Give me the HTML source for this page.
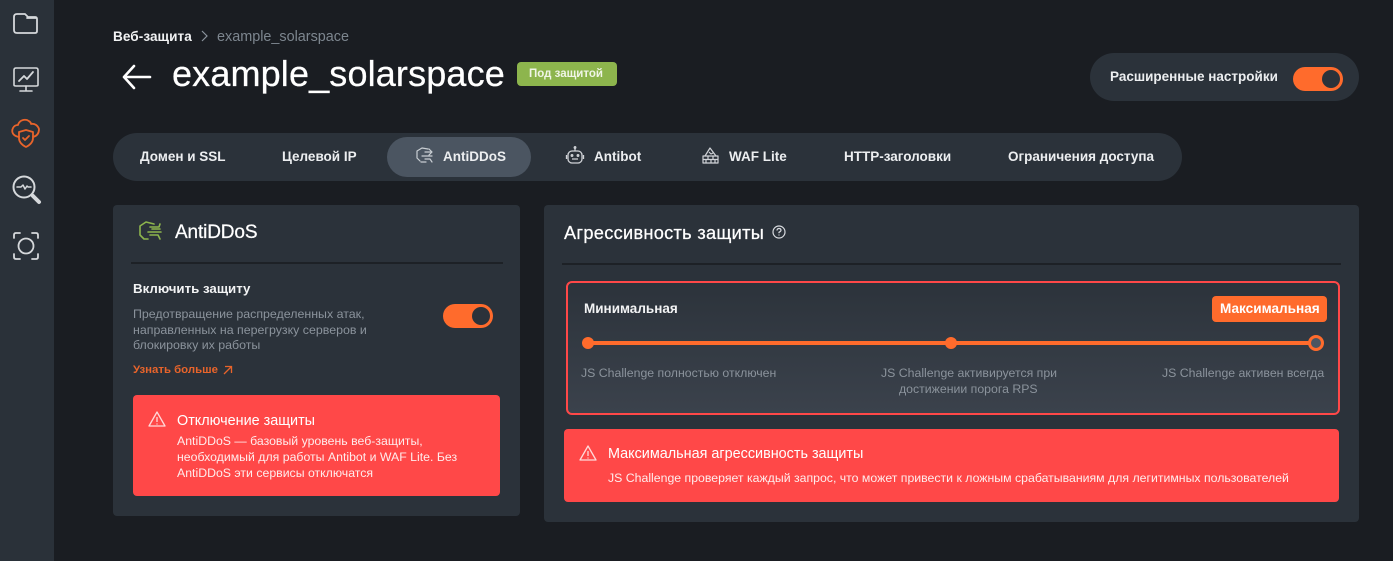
<!DOCTYPE html>
<html lang="ru"><head><meta charset="utf-8"><title>AntiDDoS</title>
<style>
html,body{margin:0;padding:0;background:#1a1d22;}
#p{position:relative;width:1393px;height:561px;overflow:hidden;background:#1a1d22;font-family:"Liberation Sans",sans-serif;color:#fff;filter:blur(.3px);}
#p div,#p span.t{position:absolute;white-space:nowrap;}
.t{line-height:1;}
.box{border-radius:4px;}
svg{position:absolute;overflow:visible;fill:none;}
.tg{width:50px;height:24px;background:#ff6b2c;border-radius:12px;}
.tg i{position:absolute;left:29px;top:3px;width:18px;height:18px;border-radius:50%;background:#2b323a;display:block;}
.tab{font-size:13.5px;font-weight:bold;color:#eceef0;top:150px;}
.g{color:#8b939c;font-size:12.3px;}
.w{-webkit-text-stroke:.25px currentColor;}
</style></head><body><div id="p">

<div style="left:0;top:0;width:54px;height:561px;background:#2a3139"></div>
<svg style="left:0;top:0" width="54" height="270" stroke="#d5d8db" stroke-width="1.8" stroke-linejoin="round" stroke-linecap="round">
<path d="M14 17q0-3 3-3h8l3 3h7q2 0 2 2v12q0 2-2 2H17q-3 0-3-3z"/><path d="M27 18h9"/>
<path d="M16 68h20q2 0 2 2v15q0 1-2 1H16q-2 0-2-1V70q0-2 2-2z" stroke-width="1.6"/><path d="M19 81l5-5 3 3 6-7"/><path d="M26 86v4M20 91h12" stroke-width="1.6"/>
<g stroke="#e8642b"><path d="M19 137c-6-1-8-5-6-9 1-2 3-3 5-3 1-4 5-6 9-5 2 1 4 2 4 4 4-1 7 2 8 5 0 4-2 7-6 8"/><path d="M26 130l7 2v6c0 4-3 7-7 9-4-2-7-5-7-9v-6z"/><path d="M23 138l2 2 4-4"/></g>
<circle cx="24" cy="187" r="10.5" stroke-width="2"/><path d="M17 187h4l2-2 2 4 2-3 1 1h3" stroke-width="1.5"/><path d="M33 196l6 6" stroke-width="4"/>
<path d="M14 238v-3q0-2 2-2h4M32 233h4q2 0 2 2v3M38 254v3q0 2-2 2h-4M20 259h-4q-2 0-2-2v-3"/><circle cx="26" cy="246" r="7.500"/>
</svg>

<span class="t" style="left:113px;top:30px;font-size:13.600px;font-weight:bold;color:#f2f3f4;letter-spacing:.05px">Веб-защита</span>
<svg style="left:200px;top:30px" width="10" height="12" stroke="#8b939c" stroke-width="1.2"><path d="M2 1l5 5-5 5"/></svg>
<span class="t" style="left:217px;top:30px;font-size:14.400px;color:#7d868f">example_solarspace</span>

<svg style="left:122px;top:64px" width="30" height="26" stroke="#fff" stroke-width="2.600" stroke-linecap="round" stroke-linejoin="round"><path d="M2 13h26M12 2L2 13l10 11"/></svg>
<span class="t w" style="left:172px;top:56px;font-size:36px;color:#fff;letter-spacing:.15px">example_solarspace</span>
<div class="box" style="left:517px;top:62px;width:100px;height:24px;background:#8db54d"></div>
<span class="t" style="left:529px;top:69px;font-size:11.500px;font-weight:bold;color:#f0f5e6">Под защитой</span>

<div style="left:1090px;top:53px;width:269px;height:48px;border-radius:24px;background:#2b323a"></div>
<span class="t" style="left:1110px;top:70px;font-size:13.500px;font-weight:bold;color:#eceef0">Расширенные настройки</span>
<div class="tg" style="left:1293px;top:67px"><i></i></div>

<div style="left:113px;top:133px;width:1069px;height:48px;border-radius:24px;background:#2b323a"></div>
<div style="left:387px;top:137px;width:144px;height:40px;border-radius:20px;background:#4b5561"></div>
<span class="t tab" style="left:140px">Домен и SSL</span>
<span class="t tab" style="left:282px">Целевой IP</span>
<span class="t tab" style="left:443px">AntiDDoS</span>
<span class="t tab" style="left:594px">Antibot</span>
<span class="t tab" style="left:729px">WAF Lite</span>
<span class="t tab" style="left:844px">HTTP-заголовки</span>
<span class="t tab" style="left:1008px">Ограничения доступа</span>

<svg style="left:416px;top:147px" width="18" height="18" stroke="#c9ced3" stroke-width="1.200" stroke-linecap="round" stroke-linejoin="round"><path d="M12 2L6 1 1 4v7l3 3M9 5h7M6 9h10M9 12h5l2 3M13 2l3 3-3 3M5 15h5"/></svg>
<svg style="left:566px;top:146px" width="18" height="18" stroke="#d0d3d7" stroke-width="1.300" stroke-linejoin="round"><rect x="2" y="5" width="14" height="12" rx="4"/><path d="M9 5V2M6 13h6M0.500 9v4M17.500 9v4"/><circle cx="9" cy="1.500" r=".8"/><circle cx="6" cy="9.500" r=".8"/><circle cx="12" cy="9.500" r=".8"/></svg>
<svg style="left:701px;top:146px" width="19" height="18" stroke="#d0d3d7" stroke-width="1.200" stroke-linejoin="round"><path d="M2 17v-7h15v7zM2 13.500h15M7 10v3.500M12 10v3.500M5 13.500V17M10 13.500V17M14 13.500V17"/><path d="M4 10l5-8 6 8M8 6l2 2 2-1"/></svg>

<div class="box" style="left:113px;top:205px;width:407px;height:311px;background:#2b323a"></div>
<svg style="left:139px;top:221px" width="24" height="22" stroke="#8db54d" stroke-width="1.600" stroke-linecap="round" stroke-linejoin="round"><path d="M15 3L7 1 1 5v9l4 4h4M11 6h9l1-3M9 11h13M13 8h8M11 14h8l2 4"/></svg>
<span class="t w" style="left:175px;top:223px;font-size:19px;color:#fff;letter-spacing:-.13px">AntiDDoS</span>
<div style="left:131px;top:262px;width:372px;height:2px;background:#1d2126"></div>

<span class="t" style="left:133px;top:282px;font-size:13.300px;font-weight:bold;color:#f2f3f4">Включить защиту</span>
<span class="t g" style="left:133px;top:308px;font-size:12.400px">Предотвращение распределенных атак,</span>
<span class="t g" style="left:133px;top:324px;font-size:12.400px">направленных на перегрузку серверов и</span>
<span class="t g" style="left:133px;top:339px;font-size:12.400px">блокировку их работы</span>
<div class="tg" style="left:443px;top:304px"><i></i></div>
<span class="t" style="left:133px;top:365px;font-size:11.400px;font-weight:bold;color:#e8642b">Узнать больше</span>
<svg style="left:223px;top:365px" width="10" height="10" stroke="#e8642b" stroke-width="1.300"><path d="M1 9l7-7M2 1.500h6.500V8"/></svg>

<div class="box" style="left:133px;top:395px;width:367px;height:101px;background:#ff4848"></div>
<svg style="left:148px;top:411px" width="18" height="16" stroke="#ffd9d9" stroke-width="1.300" stroke-linejoin="round"><path d="M9 1l8 14H1zM9 6v5M9 12.500v1"/></svg>
<span class="t" style="left:177px;top:414px;font-size:14.400px;color:#fff">Отключение защиты</span>
<span class="t" style="left:177px;top:435px;font-size:12.300px;color:#ffecec">AntiDDoS — базовый уровень веб-защиты,</span>
<span class="t" style="left:177px;top:451px;font-size:12.300px;color:#ffecec">необходимый для работы Antibot и WAF Lite. Без</span>
<span class="t" style="left:177px;top:467px;font-size:12.300px;color:#ffecec">AntiDDoS эти сервисы отключатся</span>

<div class="box" style="left:544px;top:205px;width:815px;height:317px;background:#2b323a"></div>
<span class="t w" style="left:564px;top:224px;font-size:18.200px;letter-spacing:.3px;color:#fff">Агрессивность защиты</span>
<svg style="left:772px;top:225px" width="14" height="14" stroke="#d9dce0" stroke-width="1.200"><circle cx="7" cy="7" r="6"/><path d="M5 5.500q0-2 2-2t2 1.800q0 1-2 2v1M7 9.500v1"/></svg>
<div style="left:562px;top:263px;width:779px;height:2px;background:#1d2126"></div>

<div style="left:566px;top:281px;width:770px;height:130px;border:2px solid #ff4848;border-radius:6px;background:linear-gradient(#2c333b,#3b424c)"></div>
<span class="t" style="left:584px;top:302px;font-size:13.500px;font-weight:bold;color:#f2f3f4">Минимальная</span>
<div class="box" style="left:1212px;top:296px;width:115px;height:26px;background:#ff6b2c"></div>
<span class="t" style="left:1220px;top:302px;font-size:13.600px;font-weight:bold;color:#fff">Максимальная</span>
<div style="left:588px;top:341px;width:728px;height:4px;background:#ff6b2c"></div>
<div style="left:582px;top:337px;width:12px;height:12px;border-radius:50%;background:#ff6b2c"></div>
<div style="left:945px;top:337px;width:12px;height:12px;border-radius:50%;background:#ff6b2c"></div>
<div style="left:1308px;top:335px;width:10px;height:10px;border:3px solid #ff6b2c;border-radius:50%;background:#4b5561"></div>
<span class="t g" style="left:581px;top:367px">JS Challenge полностью отключен</span>
<span class="t g" style="left:881px;top:367px">JS Challenge активируется при</span>
<span class="t g" style="left:899px;top:383px">достижении порога RPS</span>
<span class="t g" style="left:1162px;top:367px">JS Challenge активен всегда</span>

<div class="box" style="left:564px;top:429px;width:775px;height:73px;background:#ff4848"></div>
<svg style="left:579px;top:445px" width="18" height="16" stroke="#ffd9d9" stroke-width="1.300" stroke-linejoin="round"><path d="M9 1l8 14H1zM9 6v5M9 12.500v1"/></svg>
<span class="t" style="left:608px;top:447px;font-size:14.400px;color:#fff">Максимальная агрессивность защиты</span>
<span class="t" style="left:608px;top:472px;font-size:12.300px;color:#ffecec">JS Challenge проверяет каждый запрос, что может привести к ложным срабатываниям для легитимных пользователей</span>

</div></body></html>
